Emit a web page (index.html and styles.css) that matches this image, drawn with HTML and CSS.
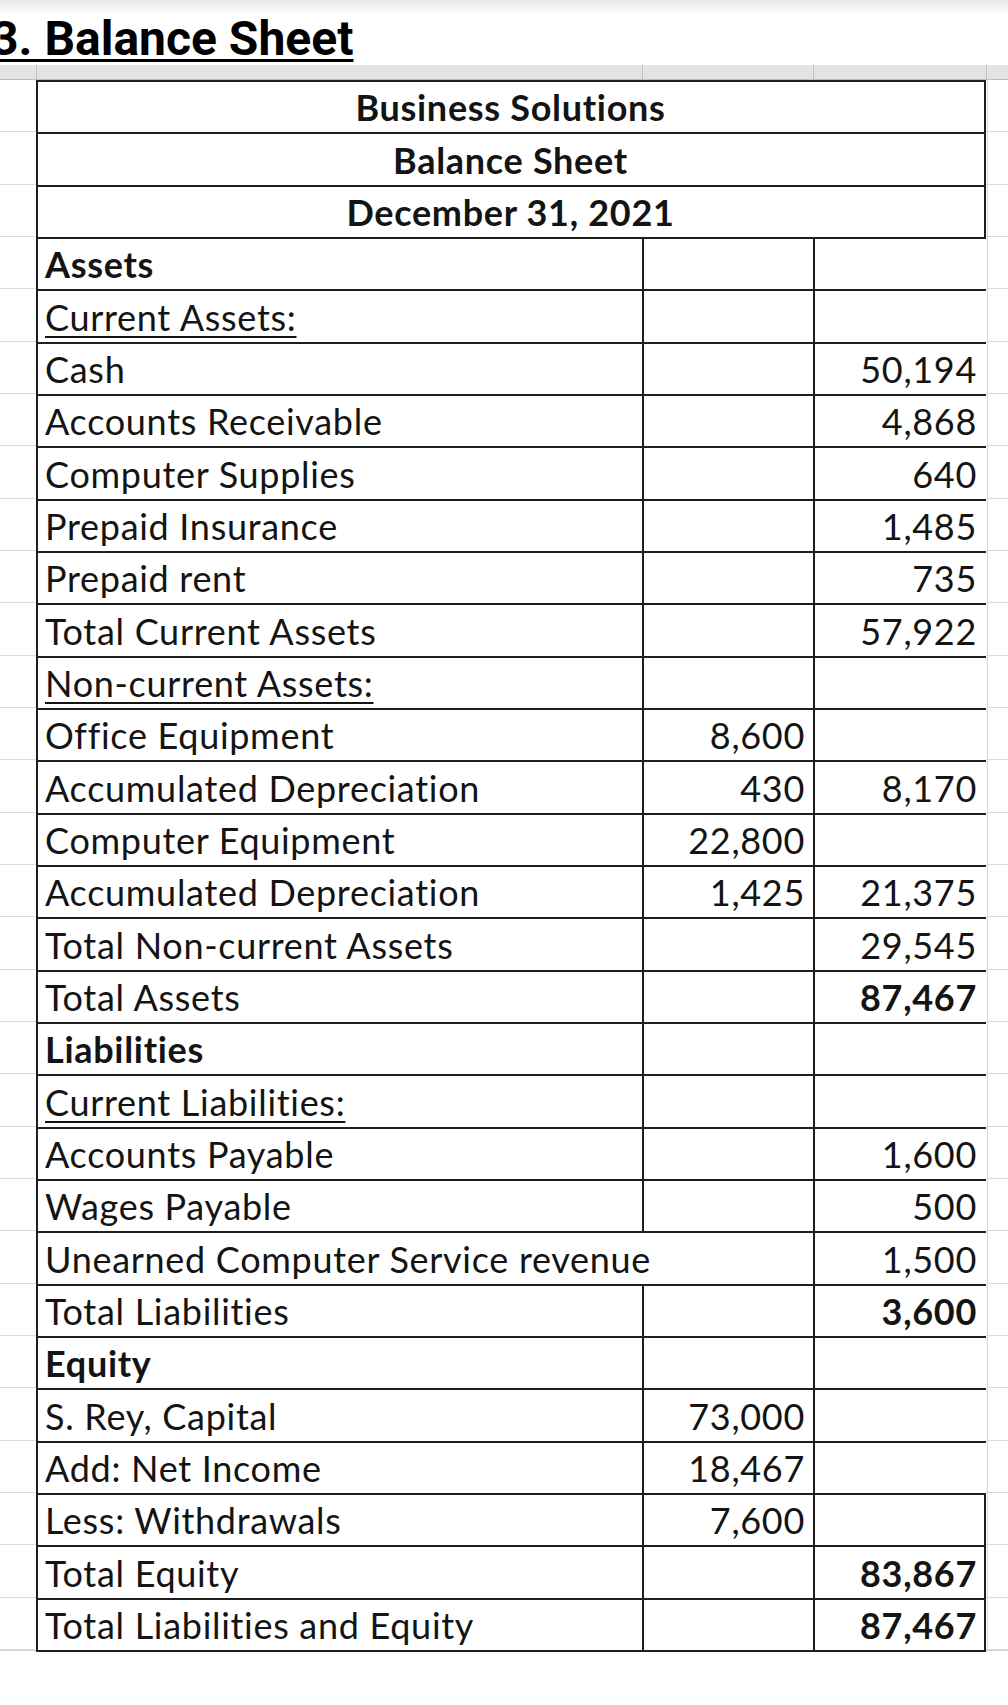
FILE: index.html
```html
<!DOCTYPE html>
<html lang="en">
<head>
<meta charset="utf-8">
<title>3. Balance Sheet</title>
<link rel="stylesheet" href="styles.css">
</head>
<body>
<h1 class="title">3. Balance Sheet</h1>
<div class="colbar"><span></span><span></span><span></span><span></span><span class="last"></span></div>
<div class="sheet">
  <div class="bs">
    <div class="c h">Business Solutions</div>
    <div class="c h">Balance Sheet</div>
    <div class="c h">December 31, 2021</div>

    <div class="c b">Assets</div><div class="c"></div><div class="c n3"></div>
    <div class="c"><span class="u">Current Assets:</span></div><div class="c"></div><div class="c n3"></div>
    <div class="c">Cash</div><div class="c"></div><div class="c n3">50,194</div>
    <div class="c">Accounts Receivable</div><div class="c"></div><div class="c n3">4,868</div>
    <div class="c">Computer Supplies</div><div class="c"></div><div class="c n3">640</div>
    <div class="c">Prepaid Insurance</div><div class="c"></div><div class="c n3">1,485</div>
    <div class="c">Prepaid rent</div><div class="c"></div><div class="c n3">735</div>
    <div class="c">Total Current Assets</div><div class="c"></div><div class="c n3">57,922</div>
    <div class="c"><span class="u">Non-current Assets:</span></div><div class="c"></div><div class="c n3"></div>
    <div class="c">Office Equipment</div><div class="c n2">8,600</div><div class="c n3"></div>
    <div class="c">Accumulated Depreciation</div><div class="c n2">430</div><div class="c n3">8,170</div>
    <div class="c">Computer Equipment</div><div class="c n2">22,800</div><div class="c n3"></div>
    <div class="c">Accumulated Depreciation</div><div class="c n2">1,425</div><div class="c n3">21,375</div>
    <div class="c">Total Non-current Assets</div><div class="c"></div><div class="c n3">29,545</div>
    <div class="c">Total Assets</div><div class="c"></div><div class="c n3 b">87,467</div>

    <div class="c b">Liabilities</div><div class="c"></div><div class="c n3"></div>
    <div class="c"><span class="u">Current Liabilities:</span></div><div class="c"></div><div class="c n3"></div>
    <div class="c">Accounts Payable</div><div class="c"></div><div class="c n3">1,600</div>
    <div class="c">Wages Payable</div><div class="c"></div><div class="c n3">500</div>
    <div class="c wide">Unearned Computer Service revenue</div><div class="c n3">1,500</div>
    <div class="c">Total Liabilities</div><div class="c"></div><div class="c n3 b">3,600</div>

    <div class="c b">Equity</div><div class="c"></div><div class="c n3"></div>
    <div class="c">S. Rey, Capital</div><div class="c n2">73,000</div><div class="c n3"></div>
    <div class="c">Add: Net Income</div><div class="c n2">18,467</div><div class="c n3"></div>
    <div class="c">Less: Withdrawals</div><div class="c n2">7,600</div><div class="c n3 rb"></div>
    <div class="c">Total Equity</div><div class="c"></div><div class="c n3 rb b">83,867</div>
    <div class="c">Total Liabilities and Equity</div><div class="c"></div><div class="c n3 rb b">87,467</div>
  </div>
</div>
</body>
</html>
```

FILE: styles.css
```css
html, body {
  margin: 0;
  padding: 0;
}

body {
  width: 1008px;
  min-height: 1705px;
  overflow: hidden;
  background: #fff linear-gradient(#e8e8e8, #fff 14px) no-repeat;
  color: #141414;
}

.title {
  margin: 0 0 0 -9px;
  height: 65px;
  box-sizing: border-box;
  padding-top: 15px;
  font-family: Roboto, "Liberation Sans", sans-serif;
  font-weight: 700;
  font-size: 48px;
  line-height: 48px;
  color: #000;
  text-decoration: underline;
  text-decoration-thickness: 3px;
  text-underline-offset: 4px;
  white-space: nowrap;
}

.colbar {
  display: grid;
  grid-template-columns: 37px 606px 171px 173px 1fr;
  height: 15px;
  box-sizing: border-box;
  background: #e4e4e4;
  border-bottom: 1px solid #bdbdbd;
}

.colbar span {
  border-right: 1px solid #bfbfbf;
}

.colbar span.last {
  border-right: none;
}

.sheet {
  height: 1570px;
  background-image:
    linear-gradient(to right, transparent 987px, #d6d6d6 987px, #d6d6d6 988px, transparent 988px),
    repeating-linear-gradient(to bottom, transparent 0, transparent 51.33px, #dcdcdc 51.33px, #dcdcdc 52.33px);
  border-bottom: 1px solid #cfcfcf;
}

.bs {
  margin-left: 36px;
  width: 950px;
  display: grid;
  grid-template-columns: 606px 171px 173px;
  grid-auto-rows: 52.33px;
  background: #fff;
  border-bottom: 2px solid #1e1e1e;
  font-family: Lato, "Open Sans", sans-serif;
  font-size: 36px;
  line-height: 36px;
  letter-spacing: 0.7px;
}

.c {
  box-sizing: border-box;
  border-top: 2px solid #1e1e1e;
  border-left: 2px solid #1e1e1e;
  display: flex;
  align-items: flex-end;
  padding: 0 8px 7px 7px;
  white-space: nowrap;
}

.h {
  grid-column: span 3;
  justify-content: center;
  font-weight: 700;
  border-right: 2px solid #1e1e1e;
}

.wide {
  grid-column: span 2;
}

.n2 {
  justify-content: flex-end;
  padding-right: 8px;
}

.n3 {
  justify-content: flex-end;
  padding-right: 9px;
}

.n3.rb {
  border-right: 2px solid #1e1e1e;
  padding-right: 7px;
}

.b {
  font-weight: 700;
}

.u {
  text-decoration: underline;
  text-decoration-thickness: 2px;
  text-underline-offset: 5px;
}
```
